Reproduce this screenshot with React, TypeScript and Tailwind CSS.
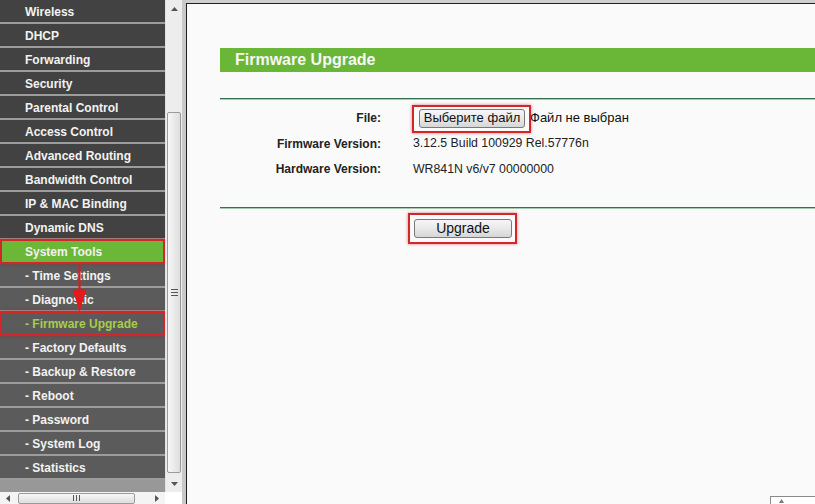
import React from 'react';

const topItems = [
  'Wireless',
  'DHCP',
  'Forwarding',
  'Security',
  'Parental Control',
  'Access Control',
  'Advanced Routing',
  'Bandwidth Control',
  'IP & MAC Binding',
  'Dynamic DNS',
];

const subItems = [
  '- Time Settings',
  '- Diagnostic',
  '- Firmware Upgrade',
  '- Factory Defaults',
  '- Backup & Restore',
  '- Reboot',
  '- Password',
  '- System Log',
  '- Statistics',
];

const redBox = 'absolute border-2 border-[#d3262b] shadow-[0_0_3px_rgba(190,20,20,0.55)] pointer-events-none';
const btn =
  'rounded-[3px] border border-[#7a7a7a] bg-gradient-to-b from-[#f6f6f6] via-[#e9e9e9] to-[#d6d6d6] text-[#111] flex items-center justify-center';

const MenuRow = ({ label, sub, active }: { label: string; sub?: boolean; active?: string }) => {
  let bg = sub ? 'bg-[#5b5b5b]' : 'bg-[#424242]';
  if (active === 'green') bg = 'bg-[#6bb738]';
  const color = active === 'text' ? 'text-[#a8cc4c]' : 'text-[#f2f2f2]';
  return (
    <div className="border-b-2 border-[#9c9c9c]">
      <div className={`h-[22px] ${bg} ${color} pl-[25px] pt-[2px] flex items-center text-[12px] font-bold leading-none`}>{label}</div>
    </div>
  );
};

const Sidebar = () => (
  <div className="relative w-[165px] h-full bg-[#989898] overflow-hidden">
    {topItems.map((t) => (
      <MenuRow key={t} label={t} />
    ))}
    <MenuRow label="System Tools" active="green" />
    {subItems.map((t) => (
      <MenuRow key={t} label={t} sub active={t === '- Firmware Upgrade' ? 'text' : undefined} />
    ))}
    <span className={`${redBox} left-0 top-[239px] w-[165px] h-[25px]`} />
    <span className={`${redBox} left-0 top-[311px] w-[165px] h-[25px]`} />
    <svg className="absolute left-0 top-0 pointer-events-none" width="165" height="340">
      <line x1="79.5" y1="265" x2="79.5" y2="292" stroke="#e11b1b" strokeWidth="2.2" />
      <polygon points="72.5,289 86.5,289 79.5,312" fill="#e11b1b" />
    </svg>
  </div>
);

const VScroll = () => (
  <div className="w-[17px] h-full bg-[#ededed] border-l border-[#e2e2e2] flex flex-col">
    <div className="h-[17px] flex items-center justify-center">
      <svg width="7" height="4"><polygon points="0,4 7,4 3.5,0" fill="#555" /></svg>
    </div>
    <div className="h-[95px]" />
    <div className="h-[361px] mx-[1px] rounded-[2px] border border-[#9a9a9a] bg-gradient-to-r from-[#f7f7f7] to-[#dedede] flex flex-col items-center justify-center gap-[2px]">
      <span className="w-[7px] h-[1px] bg-[#555]" />
      <span className="w-[7px] h-[1px] bg-[#555]" />
      <span className="w-[7px] h-[1px] bg-[#555]" />
    </div>
    <div className="flex-1" />
    <div className="h-[17px] flex items-center justify-center">
      <svg width="7" height="4"><polygon points="0,0 7,0 3.5,4" fill="#555" /></svg>
    </div>
  </div>
);

const HScroll = () => (
  <div className="h-[12px] flex bg-white">
    <div className="w-[165px] flex items-center bg-[#f4f4f4]">
      <div className="w-[16px] flex justify-center">
        <svg width="4" height="7"><polygon points="4,0 4,7 0,3.5" fill="#555" /></svg>
      </div>
      <div className="w-[117px] h-[11px] ml-[2px] rounded-[2px] border border-[#9a9a9a] bg-gradient-to-b from-[#f7f7f7] to-[#dedede] flex items-center justify-center gap-[2px]">
        <span className="w-[1px] h-[6px] bg-[#555]" />
        <span className="w-[1px] h-[6px] bg-[#555]" />
        <span className="w-[1px] h-[6px] bg-[#555]" />
      </div>
      <div className="flex-1" />
      <div className="w-[16px] flex justify-center">
        <svg width="4" height="7"><polygon points="0,0 0,7 4,3.5" fill="#555" /></svg>
      </div>
    </div>
    <div className="flex-1 bg-white" />
  </div>
);

const GreenRule = () => <div className="h-[2px] border-t border-[#3a7051] border-b border-b-[#a8cbb0]" />;

const Content = () => (
  <div className="flex-1 bg-[#fafafa] border-l border-t border-[#202020] pl-[33px] pt-[44px] text-[#222]">
    <div className="h-[24px] bg-[#6ab637] pl-[15px] flex items-center text-[16px] font-bold text-[#f7f7f7]">Firmware Upgrade</div>
    <div className="mt-[26px]">
      <GreenRule />
    </div>
    <div className="pt-[5px]">
      <div className="h-[26px] flex items-center">
        <div className="w-[161px] text-right text-[12px] font-bold">File:</div>
        <div className="ml-[32px] flex items-center">
          <span className="relative ml-[6px]">
            <span className={`${btn} w-[106px] h-[19px] text-[13px]`}>Выберите файл</span>
            <span className={`${redBox} -left-[7px] -top-[4px] -right-[6px] -bottom-[5px]`} />
          </span>
          <span className="ml-[5px] text-[13px] text-[#111]">Файл не выбран</span>
        </div>
      </div>
      <div className="h-[25px] flex items-center">
        <div className="w-[161px] text-right text-[12px] font-bold">Firmware Version:</div>
        <div className="ml-[32px] text-[12.3px]">3.12.5 Build 100929 Rel.57776n</div>
      </div>
      <div className="h-[26px] flex items-center">
        <div className="w-[161px] text-right text-[12px] font-bold">Hardware Version:</div>
        <div className="ml-[32px] text-[12.3px]">WR841N v6/v7 00000000</div>
      </div>
    </div>
    <div className="mt-[25px]">
      <GreenRule />
    </div>
    <div className="mt-[10px] pl-[194px] flex">
      <span className="relative">
        <span className={`${btn} w-[98px] h-[19px] text-[14px]`}>Upgrade</span>
        <span className={`${redBox} -left-[6px] -top-[6px] -right-[5px] -bottom-[6px]`} />
      </span>
    </div>
  </div>
);

export default function App() {
  return (
    <div className="relative w-[815px] h-[504px] overflow-hidden flex font-['Liberation_Sans',Arial,sans-serif] bg-[#cacaca]">
      <div className="w-[182px] h-full flex flex-col">
        <div className="h-[492px] flex">
          <Sidebar />
          <VScroll />
        </div>
        <HScroll />
      </div>
      <div className="w-[4px] h-full bg-[#c9c9c9]" />
      <div className="flex-1 h-full flex flex-col">
        <div className="h-[3px] bg-[#cfcfcf]" />
        <Content />
      </div>
      <div className="absolute left-[770px] top-[496px] w-[50px] h-[10px] border-l border-t border-[#8a8a8a] bg-white pl-[8px] pt-[2px]">
        <svg width="5" height="4"><polygon points="0,4 5,4 2.5,0" fill="#777" /></svg>
      </div>
    </div>
  );
}
